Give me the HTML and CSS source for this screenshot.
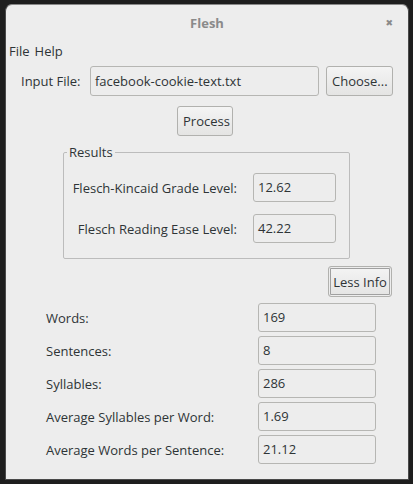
FILE: index.html
```html
<!DOCTYPE html>
<html>
<head>
<meta charset="utf-8">
<link rel="stylesheet" href="styles.css">
</head>
<body>
<div class="window">
  <div class="titlebar">
    <span class="title">Flesh</span>
    <span class="close">&#x2716;</span>
  </div>
  <div class="menubar"><span>File</span><span>Help</span></div>
  <div class="input-row">
    <span class="label">Input File:</span>
    <div class="field wide">facebook-cookie-text.txt</div>
    <button class="btn choose">Choose...</button>
  </div>
  <div class="process-row"><button class="btn process">Process</button></div>
  <fieldset class="results">
    <legend>Results</legend>
    <div class="res-row">
      <span class="res-label">Flesch-Kincaid Grade Level:</span>
      <div class="field res-field">12.62</div>
    </div>
    <div class="res-row">
      <span class="res-label">Flesch Reading Ease Level:</span>
      <div class="field res-field">42.22</div>
    </div>
  </fieldset>
  <div class="less-row"><button class="btn less">Less Info</button></div>
  <div class="stats">
    <div class="stat"><span>Words:</span><div class="field stat-field">169</div></div>
    <div class="stat"><span>Sentences:</span><div class="field stat-field">8</div></div>
    <div class="stat"><span>Syllables:</span><div class="field stat-field">286</div></div>
    <div class="stat"><span>Average Syllables per Word:</span><div class="field stat-field">1.69</div></div>
    <div class="stat"><span>Average Words per Sentence:</span><div class="field stat-field">21.12</div></div>
  </div>
</div>
</body>
</html>
```
FILE: styles.css
```css
html, body {
  margin: 0;
  padding: 0;
  background: #1e1e1e;
  height: 484px;
  overflow: hidden;
}
.window {
  box-sizing: border-box;
  margin: 4px 4px 0 5px;
  height: 476px;
  background: #ededed;
  border: 1px solid #4a4a4a;
  border-top-color: #888;
  border-radius: 7px 7px 0 0;
  font-family: "Open Sans", "DejaVu Sans", sans-serif;
  font-size: 13px;
  color: #2e3436;
  position: relative;
}
.titlebar {
  height: 36px;
  display: flex;
  align-items: center;
  justify-content: center;
  position: relative;
}
.title {
  font-weight: bold;
  color: #8a8a8a;
  font-size: 13px;
}
.close {
  position: absolute;
  right: 15px;
  top: 11px;
  font-size: 9px;
  color: #8a8a8a;
}
.menubar {
  display: flex;
  gap: 5px;
  padding-left: 3px;
  height: 20px;
  line-height: 20px;
}
.input-row {
  display: flex;
  align-items: center;
  margin-top: 5px;
  padding-left: 15px;
  height: 30px;
}
.label { width: 69px; }
.field {
  box-sizing: border-box;
  background: #ededed;
  border: 1px solid #b6b6b3;
  border-radius: 3px;
  height: 30px;
  line-height: 28px;
  padding-left: 4px;
  color: #2e3436;
}
.wide { width: 229px; }
.btn {
  font-family: inherit;
  font-size: 13px;
  color: #2e3436;
  box-sizing: border-box;
  height: 30px;
  border: 1px solid #b1b1ae;
  border-radius: 3px;
  background: linear-gradient(#f4f4f4, #e4e4e3);
  padding: 0 5px;
}
.choose { margin-left: 7px; width: 67px; }
.process-row {
  display: flex;
  justify-content: center;
  margin-top: 10px;
  padding-right: 4px;
}
.process { width: 56px; }
.results {
  box-sizing: border-box;
  margin: 10px 0 0 57px;
  width: 287px;
  height: 113px;
  border: 1px solid #bcbcbc;
  border-radius: 2px;
  padding: 15px 13px 0 0;
}
.results legend {
  padding: 0 2px;
  margin-left: 3px;
  line-height: 12px;
}
.res-row {
  display: flex;
  align-items: center;
  justify-content: flex-end;
  margin-top: 12px;
}
.res-row:first-of-type { margin-top: 0; }
.res-label { margin-right: 16px; }
.res-field { width: 83px; height: 29px; line-height: 27px; }
.less-row {
  display: flex;
  justify-content: flex-end;
  padding-right: 16px;
  margin-top: 7px;
}
.less {
  width: 64px;
  height: 31px;
  padding: 0;
  box-shadow: inset 0 0 0 1px #ededed, inset 0 0 0 2px #a0a0a0;
}
.stats {
  margin-top: 6px;
  padding-left: 40px;
  display: flex;
  flex-direction: column;
  gap: 4px;
}
.stat {
  display: flex;
  align-items: center;
  justify-content: space-between;
  width: 330px;
}
.stat-field { width: 118px; height: 29px; line-height: 27px; }
```
